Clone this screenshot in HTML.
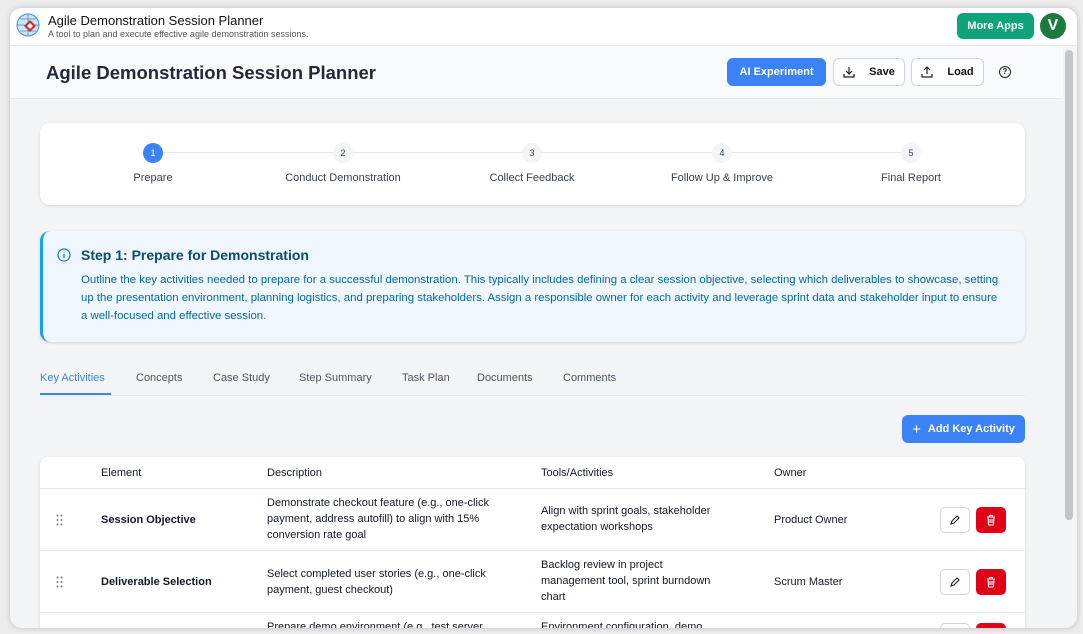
<!DOCTYPE html>
<html><head><meta charset="utf-8"><style>
*{box-sizing:border-box;margin:0;padding:0}
body{width:1083px;height:634px;background:#ececec;font-family:"Liberation Sans",sans-serif;position:relative;overflow:hidden;color:#111827}
.win{position:absolute;left:10px;top:8px;width:1067px;height:620px;border-radius:12px;background:#f3f4f6;overflow:hidden;box-shadow:0 0 6px rgba(0,0,0,.2)}
.top{position:absolute;left:0;top:0;width:100%;height:38px;background:#fff;border-bottom:1px solid #e5e7eb}
.abs{position:absolute}
.head{position:absolute;left:0;top:38px;width:1053px;height:53px;background:#f9fafb;border-bottom:1px solid #e5e7eb}
.btn{position:absolute;height:28px;border-radius:6px;font-size:11px;font-weight:bold;display:flex;align-items:center;justify-content:center}
.card{position:absolute;background:#fff;border-radius:10px;box-shadow:0 1px 3px rgba(0,0,0,.12)}
.step{position:absolute;top:20px;width:190px;text-align:center;font-size:11px;color:#374151}
.dot{width:20px;height:20px;border-radius:50%;background:#f3f4f6;margin:0 auto 9px;font-size:9px;line-height:20px;color:#374151}
.tab{position:absolute;top:364px;font-size:11px;color:#4b5563}
.row{position:absolute;left:0;width:985px;border-top:1px solid #e5e7eb}
.cell{position:absolute;font-size:11px;line-height:16px;color:#111827}
.b{font-weight:bold}
.eb{position:absolute;width:30px;height:26px;border:1px solid #d1d5db;border-radius:5px;background:#fff;display:flex;align-items:center;justify-content:center}
.db{position:absolute;width:30px;height:26px;border-radius:5px;background:#e00018;display:flex;align-items:center;justify-content:center}
.drag{position:absolute;left:16px;top:25px;width:8px;height:12px}
</style></head><body>
<svg width="0" height="0" style="position:absolute"><defs>
<g id="pen"><path d="M2 10l1-3 5-5 2 2-5 5z" stroke="#222" stroke-width="1.1" fill="none"/></g>
<g id="bin"><path d="M2 3h8M4.5 3V1.5h3V3M3 3l.6 8h4.8L9 3M5 5v4M7 5v4" stroke="#fff" stroke-width="1.1" fill="none"/></g>
<g id="dr"><circle cx="1.5" cy="1.5" r="1" fill="#777"/><circle cx="5.5" cy="1.5" r="1" fill="#777"/><circle cx="1.5" cy="6" r="1" fill="#777"/><circle cx="5.5" cy="6" r="1" fill="#777"/><circle cx="1.5" cy="10.5" r="1" fill="#777"/><circle cx="5.5" cy="10.5" r="1" fill="#777"/></g>
</defs></svg>
<div class="win">
<div class="top">
 <svg class="abs" style="left:6px;top:5px" width="24" height="24" viewBox="0 0 24 24"><circle cx="12" cy="12" r="11" fill="#cfe5f7" stroke="#3a8fd8"/><path d="M1 12h22M12 1v22M4 6h16M4 18h16" stroke="#3a8fd8" stroke-width=".8" fill="none"/><path d="M14 7l6 6-6 6-6-6z" fill="#d42a2a"/><path d="M14 10l3 3-3 3-3-3z" fill="#fff"/></svg>
 <div class="abs" style="left:38px;top:5px;font-size:13px;color:#111">Agile Demonstration Session Planner</div>
 <div class="abs" style="left:38px;top:21px;font-size:9px;color:#555">A tool to plan and execute effective agile demonstration sessions.</div>
 <div class="btn" style="left:947px;top:5px;width:77px;height:26px;background:#0fa37a;color:#fff">More Apps</div>
 <div class="abs" style="left:1030px;top:5px;width:26px;height:26px;border-radius:50%;background:#1c7a3e;color:#fff;font-weight:bold;font-size:16px;text-align:center;line-height:26px">V</div>
</div>
<div class="head">
 <div class="abs" style="left:36px;top:16px;font-size:18.5px;font-weight:bold;color:#1f2937">Agile Demonstration Session Planner</div>
 <div class="btn" style="left:717px;top:12px;width:99px;background:#3b82f6;color:#fff">AI Experiment</div>
 <div class="btn" style="left:823px;top:12px;width:72px;background:#fff;border:1px solid #d1d5db;color:#111">
  <svg width="12" height="12" viewBox="0 0 12 12" style="margin-right:14px"><path d="M6 1v7M3 5l3 3 3-3M1 8v3h10V8" stroke="#222" stroke-width="1.2" fill="none"/></svg>Save</div>
 <div class="btn" style="left:901px;top:12px;width:73px;background:#fff;border:1px solid #d1d5db;color:#111">
  <svg width="12" height="12" viewBox="0 0 12 12" style="margin-right:14px"><path d="M6 8V1M3 4l3-3 3 3M1 8v3h10V8" stroke="#222" stroke-width="1.2" fill="none"/></svg>Load</div>
 <div class="abs" style="left:989px;top:20px;width:12px;height:12px;border:1.3px solid #222;border-radius:50%;font-size:8px;font-weight:bold;text-align:center;line-height:10px">?</div>
</div>
<div class="abs" style="left:1055px;top:42px;width:8px;height:470px;border-radius:4px;background:#c4c4c4"></div>
<div class="card" style="left:30px;top:115px;width:985px;height:82px">
 <div class="abs" style="left:113px;top:29px;width:760px;height:1px;background:#e5e7eb"></div>
 <div class="step" style="left:18px"><div class="dot" style="background:#3b82f6;color:#fff">1</div>Prepare</div>
 <div class="step" style="left:208px"><div class="dot">2</div>Conduct Demonstration</div>
 <div class="step" style="left:397px"><div class="dot">3</div>Collect Feedback</div>
 <div class="step" style="left:587px"><div class="dot">4</div>Follow Up &amp; Improve</div>
 <div class="step" style="left:776px"><div class="dot">5</div>Final Report</div>
</div>
<div class="card" style="left:30px;top:223px;width:985px;height:111px;background:#eff6fd;border-left:3px solid #0ea5e9">
 <svg class="abs" style="left:14px;top:17px" width="14" height="14" viewBox="0 0 14 14"><circle cx="7" cy="7" r="6" stroke="#0284c7" stroke-width="1.2" fill="none"/><path d="M7 6v4M7 4v.5" stroke="#0284c7" stroke-width="1.3"/></svg>
 <div class="abs" style="left:38px;top:16px;font-size:14px;font-weight:bold;color:#0c4a6e">Step 1: Prepare for Demonstration</div>
 <div class="abs" style="left:38px;top:40px;width:925px;font-size:11.4px;line-height:18px;color:#0369a1">Outline the key activities needed to prepare for a successful demonstration. This typically includes defining a clear session objective, selecting which deliverables to showcase, setting up the presentation environment, planning logistics, and preparing stakeholders. Assign a responsible owner for each activity and leverage sprint data and stakeholder input to ensure a well-focused and effective session.</div>
</div>
<div class="tab" style="left:30px;color:#3b82f6">Key Activities</div>
<div class="abs" style="left:30px;top:385px;width:71px;height:2px;background:#3b82f6"></div>
<div class="tab" style="left:126px">Concepts</div>
<div class="tab" style="left:203px">Case Study</div>
<div class="tab" style="left:289px">Step Summary</div>
<div class="tab" style="left:392px">Task Plan</div>
<div class="tab" style="left:467px">Documents</div>
<div class="tab" style="left:553px">Comments</div>
<div class="abs" style="left:30px;top:387px;width:985px;height:1px;background:#e5e7eb"></div>
<div class="btn" style="left:892px;top:407px;width:123px;background:#3b82f6;color:#fff"><span style="font-size:15px;font-weight:normal;margin-right:7px">+</span>Add Key Activity</div>
<div class="card" style="left:30px;top:449px;width:985px;height:200px;border-radius:8px">
 <div class="cell" style="left:61px;top:8px">Element</div>
 <div class="cell" style="left:227px;top:8px">Description</div>
 <div class="cell" style="left:501px;top:8px">Tools/Activities</div>
 <div class="cell" style="left:734px;top:8px">Owner</div>
 <div class="row" style="top:31px;height:62px">
  <svg class="drag" viewBox="0 0 8 12"><use href="#dr"/></svg>
  <div class="cell b" style="left:61px;top:23px">Session Objective</div>
  <div class="cell" style="left:227px;top:6px;width:228px">Demonstrate checkout feature (e.g., one-click payment, address autofill) to align with 15% conversion rate goal</div>
  <div class="cell" style="left:501px;top:14px;width:190px">Align with sprint goals, stakeholder expectation workshops</div>
  <div class="cell" style="left:734px;top:23px">Product Owner</div>
  <div class="eb" style="left:900px;top:18px"><svg width="12" height="12" viewBox="0 0 12 12"><use href="#pen"/></svg></div><div class="db" style="left:936px;top:18px"><svg width="12" height="12" viewBox="0 0 12 12"><use href="#bin"/></svg></div>
 </div>
 <div class="row" style="top:93px;height:62px">
  <svg class="drag" viewBox="0 0 8 12"><use href="#dr"/></svg>
  <div class="cell b" style="left:61px;top:23px">Deliverable Selection</div>
  <div class="cell" style="left:227px;top:15px;width:240px">Select completed user stories (e.g., one-click payment, guest checkout)</div>
  <div class="cell" style="left:501px;top:6px;width:185px">Backlog review in project management tool, sprint burndown chart</div>
  <div class="cell" style="left:734px;top:23px">Scrum Master</div>
  <div class="eb" style="left:900px;top:18px"><svg width="12" height="12" viewBox="0 0 12 12"><use href="#pen"/></svg></div><div class="db" style="left:936px;top:18px"><svg width="12" height="12" viewBox="0 0 12 12"><use href="#bin"/></svg></div>
 </div>
 <div class="row" style="top:155px;height:62px">
  <div class="cell" style="left:227px;top:6px">Prepare demo environment (e.g., test server</div>
  <div class="cell" style="left:501px;top:6px">Environment configuration, demo</div>
  <div class="eb" style="left:900px;top:10px"></div><div class="db" style="left:936px;top:10px"></div>
 </div>
</div>
</div>
</body></html>
